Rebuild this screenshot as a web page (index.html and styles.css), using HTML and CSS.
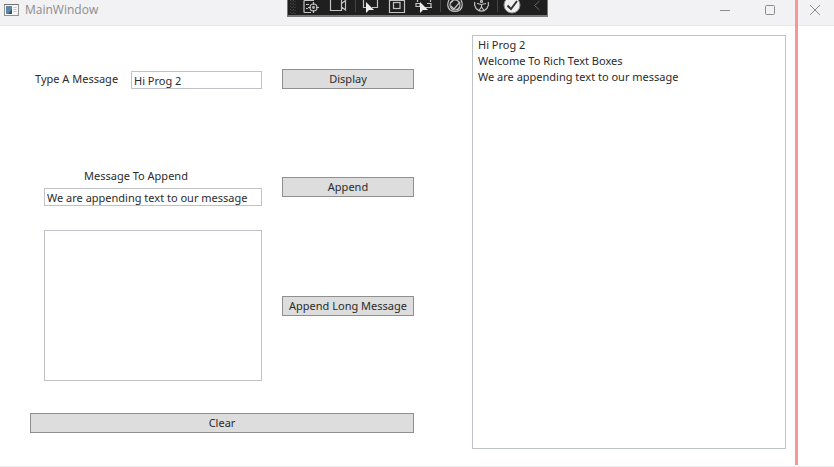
FILE: index.html
```html
<!DOCTYPE html>
<html lang="en">
<head>
<meta charset="utf-8">
<title>MainWindow</title>
<link rel="stylesheet" href="styles.css">
</head>
<body>
<header class="titlebar">
  <svg class="app-icon" width="15" height="12" viewBox="0 0 15 12" aria-hidden="true">
    <rect x=".5" y=".5" width="14" height="11" fill="#f6f6f6" stroke="#92928e"/>
    <path d="M0 .5h14" stroke="#77716a"/>
    <path d="M2 2h6v8H2z" fill="#5c87a8"/><path d="M8 5v5H4z" fill="#40505f"/>
    <path d="M9.500 3.500h3M9.500 5.500h3M9.500 7.500h3" stroke="#c8c8c8"/>
  </svg>
  <h1 class="title">MainWindow</h1>
  <div class="window-controls">
    <button class="control" aria-label="Minimize"><svg width="12" height="12" viewBox="0 0 12 12"><path d="M1 6.500h10"/></svg></button>
    <button class="control" aria-label="Maximize"><svg width="12" height="12" viewBox="0 0 12 12"><rect x="1.500" y="1.500" width="9" height="9" rx="1"/></svg></button>
    <button class="control" aria-label="Close"><svg width="12" height="12" viewBox="0 0 12 12"><path d="M1 1l10 10M11 1L1 11"/></svg></button>
  </div>
</header>

<div class="debug-bar" aria-hidden="true">
  <svg width="259" height="15" viewBox="288 0 259 15">
    <g class="grip"><path d="M290.500 0v14M293.500 0v14"/><path d="M292 1v14M295 1v14"/></g>
    <g class="lines">
      <path d="M304 .5h10M304 .5v12M306 4.500h3M306 8.500h2M304 12.500h7"/>
      <circle cx="313.500" cy="7.500" r="3.500"/><circle cx="313.500" cy="7.500" r=".8"/><path d="M313.500 2v3M313.500 10v3M308 7.500h3M316 7.500h3"/>
      <path d="M330.500 0v10.500h11V0M341.500 3.500l4-3v9.500l-4-3"/>
      <path d="M363.500 0v7.500h3M372 7.500h5.500V0"/>
      <path d="M389.500 0v12.500h15V0M389.500 .5h15"/><rect x="393.500" y="2.500" width="6.500" height="6"/>
      <path d="M417.500 0v2M430.500 0v2M416 3.500h4v3h-4zM428 7.500h4M427 3.500h4v4M424 7.500h4"/>
      <path d="M449 0q-3 6 1 10M461 0q3 6-1 10M450 10q5 3 10 0"/>
      <circle cx="455" cy="5" r="5"/><path d="M451 6l3 3 6-7M450 3l3-2M457 10l3-3"/>
      <path d="M474.800 2a7 7 0 1 0 13.400 0"/><path d="M477 3.500l4.500 1 4.500-1M481.500 4v3l-3 4M481.500 7l3 4"/>
      <circle cx="481.500" cy="1.500" r="1"/>
    </g>
    <path class="pointer" d="M366 2v11l3-3h5zM420 2v11l3-3h5z"/>
    <path class="divider" d="M355.500 0v12M440.500 0v12M497.500 0v12"/>
    <circle class="badge" cx="512" cy="5" r="8"/>
    <path class="check" d="M507.500 5.500l3.500 3.500 6-8"/>
    <path class="chevron" d="M539.500 1l-5 4.500 5 4.500"/>
  </svg>
</div>

<main class="content">
  <form class="composer">
    <div class="row">
      <div class="inline-field">
        <label for="message">Type A Message</label>
        <input id="message" class="box" type="text" value="Hi Prog 2">
      </div>
      <button class="action" type="button">Display</button>
    </div>
    <div class="row append-row">
      <div class="stacked-field">
        <label for="append">Message To Append</label>
        <input id="append" class="box" type="text" value="We are appending text to our message">
      </div>
      <button class="action" type="button">Append</button>
    </div>
    <div class="row long-row">
      <textarea class="box long-message" aria-label="Long message"></textarea>
      <button class="action" type="button">Append Long Message</button>
    </div>
    <button class="action clear" type="reset">Clear</button>
  </form>
  <textarea class="box output" aria-label="Messages">Hi Prog 2
Welcome To Rich Text Boxes
We are appending text to our message</textarea>
</main>
<div class="guide" aria-hidden="true"></div>
</body>
</html>
```
FILE: styles.css
```css
* { box-sizing: border-box; }

body {
  position: relative;
  display: flex;
  flex-direction: column;
  min-height: 100vh;
  margin: 0;
  background: #fff;
  color: #2b2b2b;
  font: 11px/16px "Noto Sans", "Open Sans", sans-serif;
}

button, input, textarea {
  color: inherit;
  font: inherit;
  border-radius: 0;
}

.titlebar {
  display: flex;
  align-items: center;
  height: 26px;
  padding: 0 1px 5px 4px;
  background: #f2f2f4;
  border-bottom: 1px solid #e8e8e9;
}

.title {
  margin: 0 0 0 6px;
  color: #8c8c8c;
  font: 400 12px/16px "Open Sans", "Noto Sans", sans-serif;
}

.window-controls {
  display: flex;
  margin-left: auto;
}

.control {
  display: flex;
  align-items: center;
  justify-content: center;
  width: 45px;
  height: 20px;
  padding: 0 0 0 9px;
  border: 0;
  background: none;
}

.control svg {
  fill: none;
  stroke: #8c8c8c;
}

.debug-bar {
  position: absolute;
  top: 0;
  left: 287px;
  border: 1px solid #777;
  border-width: 0 1px 2px;
  background: #1f1f1f;
}

.debug-bar svg { display: block; }
.grip { stroke: #4c4c4c; stroke-dasharray: 1 2; }
.lines { fill: none; stroke: #c4c4c4; stroke-width: 1.2; }
.pointer { fill: #eee; }
.divider { stroke: #444; }
.badge { fill: #f0f0f0; stroke: #8c8c8c; }
.check { fill: none; stroke: #333; stroke-width: 2; }
.chevron { fill: none; stroke: #666; }

.content {
  flex: 1;
  display: grid;
  grid-template-columns: minmax(0, 384fr) minmax(0, 314fr);
  gap: 58px;
  padding: 9px 48px 17px 30px;
  border-bottom: 1px solid #ececec;
}

.composer { padding-top: 34px; }

.row {
  display: grid;
  grid-template-columns: minmax(0, 1fr) 132px;
  gap: 20px;
  align-items: center;
}

.inline-field {
  display: grid;
  grid-template-columns: minmax(0, 1fr) 131px;
  align-items: end;
  height: 20px;
  padding-left: 5px;
}

.inline-field label {
  align-self: center;
  white-space: nowrap;
}

.stacked-field {
  display: flex;
  flex-direction: column;
  gap: 4px;
  margin-left: 14px;
}

.stacked-field label { margin-left: 40px; }
.append-row { margin-top: 79px; }
.long-row { margin-top: 24px; }

.box {
  display: block;
  min-width: 0;
  height: 18px;
  padding: 0 2px;
  border: 1px solid #bfc2c6;
  background: #fff;
  outline: 0;
  resize: none;
}

.long-message {
  height: 151px;
  margin-left: 14px;
}

.output {
  height: auto;
  padding: 1px 5px;
}

.action {
  height: 20px;
  padding: 0;
  border: 1px solid #8f8f8f;
  background: #dcdddc;
  white-space: nowrap;
}

.clear {
  width: 100%;
  margin-top: 32px;
}

.guide {
  position: absolute;
  top: 0;
  right: 36px;
  bottom: 2px;
  width: 3px;
  background: #f99595;
}
```
